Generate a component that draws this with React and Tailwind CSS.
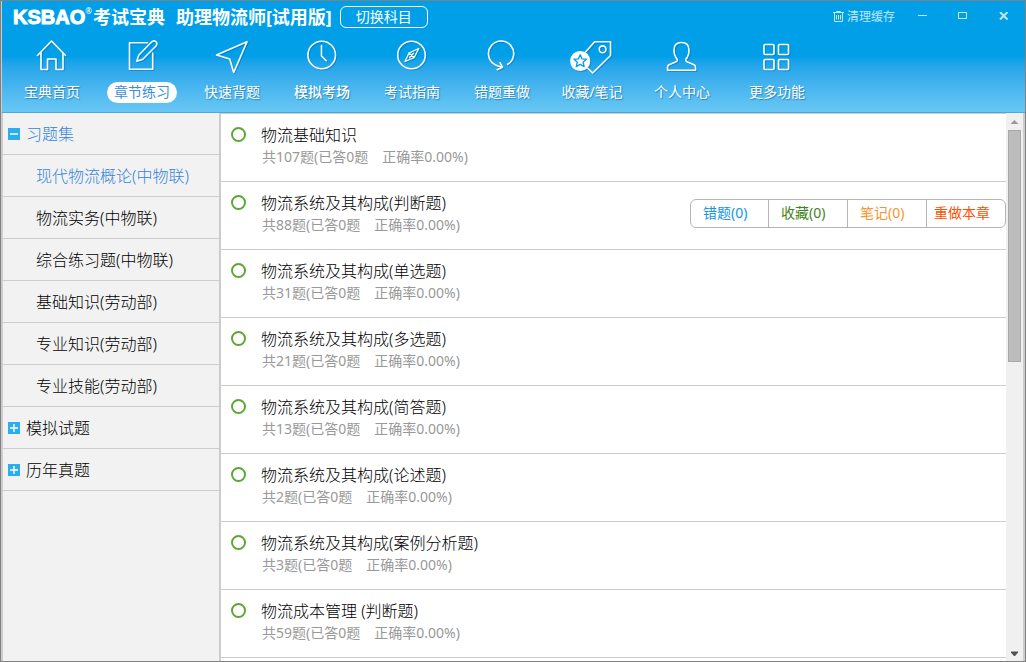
import React from "react";

const shadow = "[filter:drop-shadow(1px_1px_0px_rgba(0,80,140,0.35))]";

const navItems = [
  {
    label: "宝典首页",
    box: "30 38 44 36",
    art: (
      <>
        <path d="M37.5 55.5 51.5 41 65.5 55.5" />
        <path d="M41 53V69.5H47.5V59H56V69.5H63V53" />
      </>
    ),
  },
  {
    label: "章节练习",
    active: true,
    box: "120 38 44 36",
    art: (
      <>
        <path d="M147.5 42.7H129.5V69.3H152.7V53" />
        <path d="M136.8 61.3 138.7 55.2 151.8 41.8Q154 39.8 156 41.8 157.8 43.8 156 46L142.8 59.2Z" />
      </>
    ),
  },
  {
    label: "快速背题",
    box: "210 38 44 36",
    art: <path d="M216.5 55 247 41.7 233.7 72.5 229.7 59Z" />,
  },
  {
    label: "模拟考场",
    strong: true,
    box: "300 38 44 36",
    art: (
      <>
        <circle cx="321.7" cy="55" r="13.8" />
        <path d="M321.5 45.5V56L326.3 60.7" />
      </>
    ),
  },
  {
    label: "考试指南",
    box: "390 38 44 36",
    art: (
      <>
        <circle cx="411.5" cy="55" r="13.8" />
        <path strokeWidth="1.3" d="M418.7 48.5 414.2 57.5 405 61.5 409 53Z M409 53 414.2 57.5 M409.5 57.5 413.5 53.2" />
      </>
    ),
  },
  {
    label: "错题重做",
    box: "480 38 44 36",
    art: (
      <>
        <path d="M507.7 64.3A12.6 12.6 0 1 0 494.5 64.3Q497.5 66.3 502 67" />
        <path d="M500 62.7 502.5 67.2 497.2 69.7" />
      </>
    ),
  },
  {
    label: "收藏/笔记",
    box: "570 38 44 36",
    art: (
      <>
        <path d="M585.5 52 594.7 41.7H610.5V55.5L592.7 73 588 68.5" />
        <circle cx="602.6" cy="49.3" r="3.4" />
        <circle cx="580.2" cy="61" r="9.3" fill="white" />
        <path
          stroke="#0c9fe6"
          strokeWidth="1.4"
          d="M580.2 54.8 582 58.9 586.4 59.3 583.1 62.2 584.1 66.6 580.2 64.3 576.3 66.6 577.3 62.2 574 59.3 578.4 58.9Z"
        />
      </>
    ),
  },
  {
    label: "个人中心",
    box: "660 38 44 36",
    art: (
      <path d="M667.5 70.3V67.2Q667.5 65.2 669.5 64.5L675.5 62Q678 61 677 59C674.8 56.5 674 53.5 674 50 674 45 677 42.5 681.5 42.5S689 45 689 50C689 53.5 688.2 56.5 686 59Q685 61 687.5 62L693.5 64.5Q695.5 65.2 695.5 67.2V70.3Z" />
    ),
  },
  {
    label: "更多功能",
    wide: true,
    box: "755 38 44 36",
    art: (
      <>
        <rect x="764" y="44.5" width="10" height="10" rx="1" />
        <rect x="778.5" y="44.5" width="10" height="10" rx="1" />
        <rect x="764" y="59.5" width="10" height="10" rx="1" />
        <rect x="778.5" y="59.5" width="10" height="10" rx="1" />
      </>
    ),
  },
];

const sections = [
  {
    title: "习题集",
    open: true,
    items: ["现代物流概论(中物联)", "物流实务(中物联)", "综合练习题(中物联)", "基础知识(劳动部)", "专业知识(劳动部)", "专业技能(劳动部)"],
  },
  { title: "模拟试题", items: [] },
  { title: "历年真题", items: [] },
];

const chapters = [
  { title: "物流基础知识", count: 107 },
  { title: "物流系统及其构成(判断题)", count: 88, actions: true },
  { title: "物流系统及其构成(单选题)", count: 31 },
  { title: "物流系统及其构成(多选题)", count: 21 },
  { title: "物流系统及其构成(简答题)", count: 13 },
  { title: "物流系统及其构成(论述题)", count: 2 },
  { title: "物流系统及其构成(案例分析题)", count: 3 },
  { title: "物流成本管理 (判断题)", count: 59 },
];

function Header() {
  return (
    <header className="shrink-0 border-b border-[#4da6dd] bg-linear-to-b from-[#009fe8] from-50% to-[#68c7f4] text-white">
      <div className="flex h-8 items-center justify-between pl-[11px] pr-4 pb-px">
        <div className="flex items-center">
          <div className="flex items-center">
            <span className="font-['Liberation_Sans',sans-serif] text-[20px] leading-6 font-bold [-webkit-text-stroke:1px_white]">KSBAO</span>
            <span className="self-start text-[8px] leading-3">®</span>
            <span className="ml-px text-[18px] leading-6 font-bold">考试宝典</span>
          </div>
          <h1 className="ml-[11px] text-[18px] leading-6 font-bold">助理物流师[试用版]</h1>
          <button className="ml-2 h-[22px] w-[88px] rounded-md border border-white text-[14px] leading-5">切换科目</button>
        </div>
        <div className="flex items-center text-[#bfe7fa]">
          <button className="flex items-center gap-[3px] text-[12px] leading-4">
            <svg className="h-[11px] w-[11px]" viewBox="0 0 11 11" fill="none" stroke="currentColor" aria-hidden="true">
              <path d="M0 1.5H11M3.5 1V.5H7.5V1M1.5 2V10.5H9.5V2M3.5 4V8.5M5.5 4V8.5M7.5 4V8.5" />
            </svg>
            清理缓存
          </button>
          <button aria-label="最小化" className="ml-[23px]">
            <svg className="h-[10px] w-[10px]" viewBox="0 0 10 10" stroke="currentColor"><path d="M0 3.5H9" /></svg>
          </button>
          <button aria-label="最大化" className="ml-[30px]">
            <svg className="h-[10px] w-[10px]" viewBox="0 0 10 10" fill="none" stroke="currentColor"><rect x=".5" y=".5" width="8" height="6" /></svg>
          </button>
          <button aria-label="关闭" className="ml-[31px]">
            <svg className="h-[10px] w-[10px]" viewBox="0 0 10 10" stroke="currentColor" strokeWidth="2"><path d="M1 0 8.5 7.5M8.5 0 1 7.5" /></svg>
          </button>
        </div>
      </div>
      <nav className="flex pt-[5px] pb-[9px] pl-[5px]">
        {navItems.map((n) => (
          <button key={n.label} className={`flex flex-col items-center gap-2 ${n.wide ? "w-[100px]" : "w-[90px]"}`}>
            <svg
              className={`h-9 w-11 ${shadow}`}
              viewBox={n.box}
              fill="none"
              stroke="white"
              strokeWidth="1.6"
              strokeLinejoin="round"
              strokeLinecap="round"
              aria-hidden="true"
            >
              {n.art}
            </svg>
            <span
              className={`h-[21px] rounded-full px-[7px] text-[14px] leading-[19px] whitespace-nowrap ${
                n.active ? "bg-white text-[#3d8fdb]" : "[text-shadow:1px_1px_1px_rgba(0,80,140,0.5)]"
              } ${n.strong ? "font-medium" : ""}`}
            >
              {n.label}
            </span>
          </button>
        ))}
      </nav>
    </header>
  );
}

function Sidebar() {
  return (
    <aside className="w-[218px] shrink-0 border-r border-l border-[#ccc] bg-[#f2f2f2] text-[16px] leading-6 font-light">
      {sections.map((s) => (
        <div key={s.title}>
          <button
            aria-expanded={!!s.open}
            className={`flex h-[42px] w-full items-center gap-[6px] border-b border-[#ccc] pl-[5px] ${s.open ? "text-[#3585d6]" : "text-black"}`}
          >
            <svg className="h-3 w-3" viewBox="0 0 12 12" aria-hidden="true">
              <rect width="12" height="12" fill="#2baeef" />
              <path d={s.open ? "M2 6H10" : "M2 6H10M6 2V10"} stroke="white" strokeWidth="1.4" />
            </svg>
            {s.title}
          </button>
          {s.items.map((item, i) => (
            <button
              key={item}
              className={`block h-[42px] w-full border-b border-[#ccc] pl-[33px] text-left ${i === 0 ? "text-[#3585d6]" : "text-black"}`}
            >
              {item}
            </button>
          ))}
        </div>
      ))}
    </aside>
  );
}

function Actions() {
  return (
    <div className="flex h-[29px] divide-x divide-[#b5b5b5] rounded-md border border-[#b5b5b5] text-[14px] leading-5">
      <button className="w-[78px] pb-px pl-3 text-left text-[#1296e8]">错题(0)</button>
      <button className="w-[79px] pb-px pl-3 text-left text-[#3f8420]">收藏(0)</button>
      <button className="w-[79px] pb-px pl-3 text-left text-[#f7962c]">笔记(0)</button>
      <button className="w-[78px] pb-px pl-[7px] text-left text-[#ff5000]">重做本章</button>
    </div>
  );
}

function ChapterList() {
  return (
    <main className="min-w-0 flex-1 overflow-hidden border-t border-l border-[#ccc] bg-white">
      <ul>
        {chapters.map((c) => (
          <li key={c.title} className="flex h-[68px] items-start justify-between border-b border-[#ccc] pl-[10px]">
            <div className="flex">
              <span className="mt-[13px] h-[15px] w-[15px] rounded-full border-2 border-[#5aa832]" />
              <div className="ml-[15px] pt-[9px]">
                <a href="#chapter" className="block text-[16px] leading-6 font-light text-black">{c.title}</a>
                <p className="flex gap-[14px] pl-px text-[14px] leading-5 text-[#999]">
                  <span>{`共${c.count}题(已答0题`}</span>
                  <span>正确率0.00%)</span>
                </p>
              </div>
            </div>
            {c.actions && (
              <div className="pt-[17px]">
                <Actions />
              </div>
            )}
          </li>
        ))}
      </ul>
    </main>
  );
}

function ScrollTrack() {
  return (
    <div className="flex w-[17px] shrink-0 flex-col items-center bg-[#f0f0f0]" aria-hidden="true">
      <svg className="h-[17px] w-[17px] shrink-0" viewBox="0 0 17 17"><path d="M4.5 11 8.5 7 12.5 11Z" fill="#999" /></svg>
      <div className="h-[232px] w-[13px] border border-[#a8a8a8] bg-[#bcbcbc]" />
      <div className="flex-1" />
      <svg className="h-[17px] w-[17px] shrink-0" viewBox="0 0 17 17"><path d="M5 8 8.5 12 12 8Z" fill="#505050" stroke="#505050" /></svg>
    </div>
  );
}

export default function App() {
  return (
    <div className="flex h-screen flex-col border border-[#808080] bg-[#ccc] pl-px font-['Noto_Sans','Noto_Sans_CJK_SC',sans-serif]">
      <Header />
      <div className="flex min-h-0 flex-1 pr-[2px]">
        <Sidebar />
        <ChapterList />
        <ScrollTrack />
      </div>
    </div>
  );
}
